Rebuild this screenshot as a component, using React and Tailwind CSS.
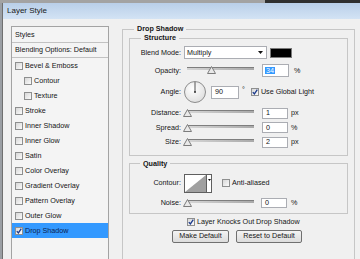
const styleItems = [
    { label: 'Bevel & Emboss' },
    { label: 'Contour', sub: true },
    { label: 'Texture', sub: true },
    { label: 'Stroke' },
    { label: 'Inner Shadow' },
    { label: 'Inner Glow' },
    { label: 'Satin' },
    { label: 'Color Overlay' },
    { label: 'Gradient Overlay' },
    { label: 'Pattern Overlay' },
    { label: 'Outer Glow' },
    { label: 'Drop Shadow', checked: true, active: true },
];

const Check = ({ checked }) => (
    <span className="flex h-[8px] w-[8px] shrink-0 items-center justify-center border border-[#8e8f8f] bg-gradient-to-br from-[#d8d8d8] to-[#fbfbfb]">
        {checked && (
            <svg width="6" height="6" viewBox="0 0 6 6">
                <path d="M0.8 3.1 L2.4 4.9 L5.3 0.7" fill="none" stroke="#1b3a8c" strokeWidth="1.3" />
            </svg>
        )}
    </span>
);

const Slider = ({ value }) => (
    <div className="relative h-full w-[70px] shrink-0">
        <div className="ml-[3px] mt-[2.5px] h-[3px] border-t border-[#7e7e7e] bg-gradient-to-r from-[#d6d6d6] to-[#a9a9a9]" />
        <svg
            className="absolute top-[1.5px]"
            style={{ left: `calc(${value}% - 1px)` }}
            width="9"
            height="8"
            viewBox="0 0 9 8"
        >
            <path d="M4.5 0.5 L8.5 7.5 L0.5 7.5 Z" fill="#e9e9e9" stroke="#7c7c7c" />
        </svg>
    </div>
);

const Field = ({ value, w, h, selected }) => (
    <div
        className={`flex shrink-0 items-center border border-[#abadb3] bg-white pl-[2px] ${w} ${h}`}
    >
        {selected ? <span className="bg-[#3399ff] px-[1px] text-white">{value}</span> : <span className="pl-[1px]">{value}</span>}
    </div>
);

const Row = ({ label, className = '', children }) => (
    <div className={`flex items-center ${className}`}>
        <span className="w-[51px] shrink-0 pr-[0px] text-right">{label}</span>
        <div className="ml-[3px] flex h-full items-center">{children}</div>
    </div>
);

const App = () => {
    return (
        <div className="flex h-[259px] w-[360px] flex-col overflow-hidden bg-[#f0f0f0] font-['Liberation_Sans',Arial,sans-serif] text-[7.2px] leading-none text-[#151515]">
            {/* top strip */}
            <div className="flex h-[3px] shrink-0">
                <div className="w-[265px] bg-[#a3a3a3]" />
                <div className="flex-1 bg-[#303030]" />
            </div>

            <div className="flex min-h-0 flex-1">
                <div className="w-[3px] shrink-0 border-r border-[#6f6f6f] bg-[#9a9ea3]" />

                <div className="flex min-w-0 flex-1 flex-col">
                    {/* Title bar */}
                    <div className="flex h-[16px] shrink-0 items-center bg-gradient-to-b from-[#b9cfe9] to-[#d3e3f4] pl-[4px] text-[8px] text-[#1a1a1a]">
                        Layer Style
                    </div>

                    <div className="flex min-h-0 flex-1 pl-[8px]">
                        {/* Styles list */}
                        <div className="mt-[7px] flex h-[240px] w-[98px] shrink-0 flex-col border border-[#a3a3a3] bg-[#f4f4f4]">
                            <div className="flex h-[16px] shrink-0 items-center border-b border-[#c2c2c2] pl-[3px]">Styles</div>
                            <div className="flex h-[15px] shrink-0 items-center border-b border-[#c2c2c2] pl-[3px]">Blending Options: Default</div>
                            {styleItems.map((item) => (
                                <div
                                    key={item.label}
                                    className={`flex h-[15px] shrink-0 items-center ${item.sub ? 'pl-[12px]' : 'pl-[3px]'} ${item.active ? 'bg-[#3399ff] text-[#0d1f4f]' : ''}`}
                                >
                                    <Check checked={item.checked} />
                                    <span className="ml-[2px]">{item.label}</span>
                                </div>
                            ))}
                        </div>

                        {/* Drop Shadow group */}
                        <fieldset className="ml-[13px] mt-[5px] h-[260px] w-[233px] min-w-0 shrink-0 border border-[#c6c6c6] px-[6px]">
                            <legend className="ml-[5px] px-[3px] text-[7.2px] font-bold leading-[10px]">Drop Shadow</legend>

                            <fieldset className="min-w-0 border border-[#c6c6c6] pb-[7px]">
                                <legend className="ml-[11px] px-[3px] font-bold leading-[8px]">Structure</legend>

                                <Row label="Blend Mode:" className="mt-[4px] h-[13px]">
                                    <div className="flex h-[13px] w-[83px] items-center justify-between border border-[#abadb3] bg-white pl-[2px] pr-[3px]">
                                        <span>Multiply</span>
                                        <svg width="5" height="3" viewBox="0 0 5 3">
                                            <path d="M0 0 H5 L2.5 3 Z" fill="#111" />
                                        </svg>
                                    </div>
                                    <div className="ml-[3px] h-[10px] w-[22px] border border-[#7a7a7a] bg-black" />
                                </Row>

                                <Row label="Opacity:" className="mt-[5px] h-[13px]">
                                    <Slider value={34} />
                                    <div className="ml-[8px]">
                                        <Field value="34" w="w-[27px]" h="h-[13px]" selected />
                                    </div>
                                    <span className="ml-[5px]">%</span>
                                </Row>

                                <Row label="Angle:" className="mt-[4px] h-[22px]">
                                    <svg width="22" height="22" viewBox="0 0 22 22">
                                        <defs>
                                            <radialGradient id="dial" cx="0.4" cy="0.35" r="0.7">
                                                <stop offset="0" stopColor="#ffffff" />
                                                <stop offset="1" stopColor="#dedede" />
                                            </radialGradient>
                                        </defs>
                                        <circle cx="11" cy="11" r="10.5" fill="url(#dial)" stroke="#8c8c8c" />
                                        <line x1="11" y1="11" x2="11" y2="1" stroke="#555" strokeWidth="1" />
                                        <circle cx="11" cy="11" r="1" fill="#333" />
                                    </svg>
                                    <div className="ml-[5px]">
                                        <Field value="90" w="w-[28px]" h="h-[13px]" />
                                    </div>
                                    <span className="ml-[3px] self-start pt-[5px]">°</span>
                                    <div className="ml-[6px]">
                                        <Check checked />
                                    </div>
                                    <span className="ml-[2px]">Use Global Light</span>
                                </Row>

                                <Row label="Distance:" className="mt-[4.5px] h-[11px]">
                                    <Slider value={0} />
                                    <div className="ml-[8px]">
                                        <Field value="1" w="w-[26px]" h="h-[11px]" />
                                    </div>
                                    <span className="ml-[3px]">px</span>
                                </Row>
                                <Row label="Spread:" className="mt-[3.5px] h-[11px]">
                                    <Slider value={0} />
                                    <div className="ml-[8px]">
                                        <Field value="0" w="w-[26px]" h="h-[11px]" />
                                    </div>
                                    <span className="ml-[3px]">%</span>
                                </Row>
                                <Row label="Size:" className="mt-[3.5px] h-[11px]">
                                    <Slider value={0} />
                                    <div className="ml-[8px]">
                                        <Field value="2" w="w-[26px]" h="h-[11px]" />
                                    </div>
                                    <span className="ml-[3px]">px</span>
                                </Row>
                            </fieldset>

                            <fieldset className="mt-[3px] min-w-0 border border-[#c6c6c6] pb-[5px]">
                                <legend className="ml-[10px] px-[3px] font-bold leading-[10px]">Quality</legend>

                                <Row label="Contour:" className="mt-[5px] h-[19px]">
                                    <div className="flex h-[19px] w-[28px] border border-[#5f5f5f] bg-white">
                                        <svg width="21" height="17" viewBox="0 0 21 17" className="shrink-0">
                                            <path d="M0 17 L21 0 L21 17 Z" fill="#a0a0a0" />
                                        </svg>
                                        <div className="flex flex-1 items-start justify-center border-l border-[#5f5f5f] pt-[4px]">
                                            <svg width="3" height="2" viewBox="0 0 3 2">
                                                <path d="M0 0 H3 L1.5 2 Z" fill="#111" />
                                            </svg>
                                        </div>
                                    </div>
                                    <div className="ml-[10px]">
                                        <Check />
                                    </div>
                                    <span className="ml-[2px]">Anti-aliased</span>
                                </Row>

                                <Row label="Noise:" className="mt-[5px] h-[10px]">
                                    <Slider value={0} />
                                    <div className="ml-[7px]">
                                        <Field value="0" w="w-[26px]" h="h-[10px]" />
                                    </div>
                                    <span className="ml-[4px]">%</span>
                                </Row>
                            </fieldset>

                            <div className="mt-[4px] flex h-[9px] items-center pl-[58px]">
                                <Check checked />
                                <span className="ml-[2px]">Layer Knocks Out Drop Shadow</span>
                            </div>

                            <div className="mt-[3px] flex gap-[7px] pl-[43px]">
                                <button className="flex h-[13px] w-[57px] items-center justify-center rounded-[2px] border border-[#707070] bg-gradient-to-b from-[#f4f4f4] to-[#dcdcdc]">
                                    Make Default
                                </button>
                                <button className="flex h-[13px] w-[66px] items-center justify-center rounded-[2px] border border-[#707070] bg-gradient-to-b from-[#f4f4f4] to-[#dcdcdc]">
                                    Reset to Default
                                </button>
                            </div>
                        </fieldset>
                    </div>
                </div>
            </div>
        </div>
    );
};

export default App;
